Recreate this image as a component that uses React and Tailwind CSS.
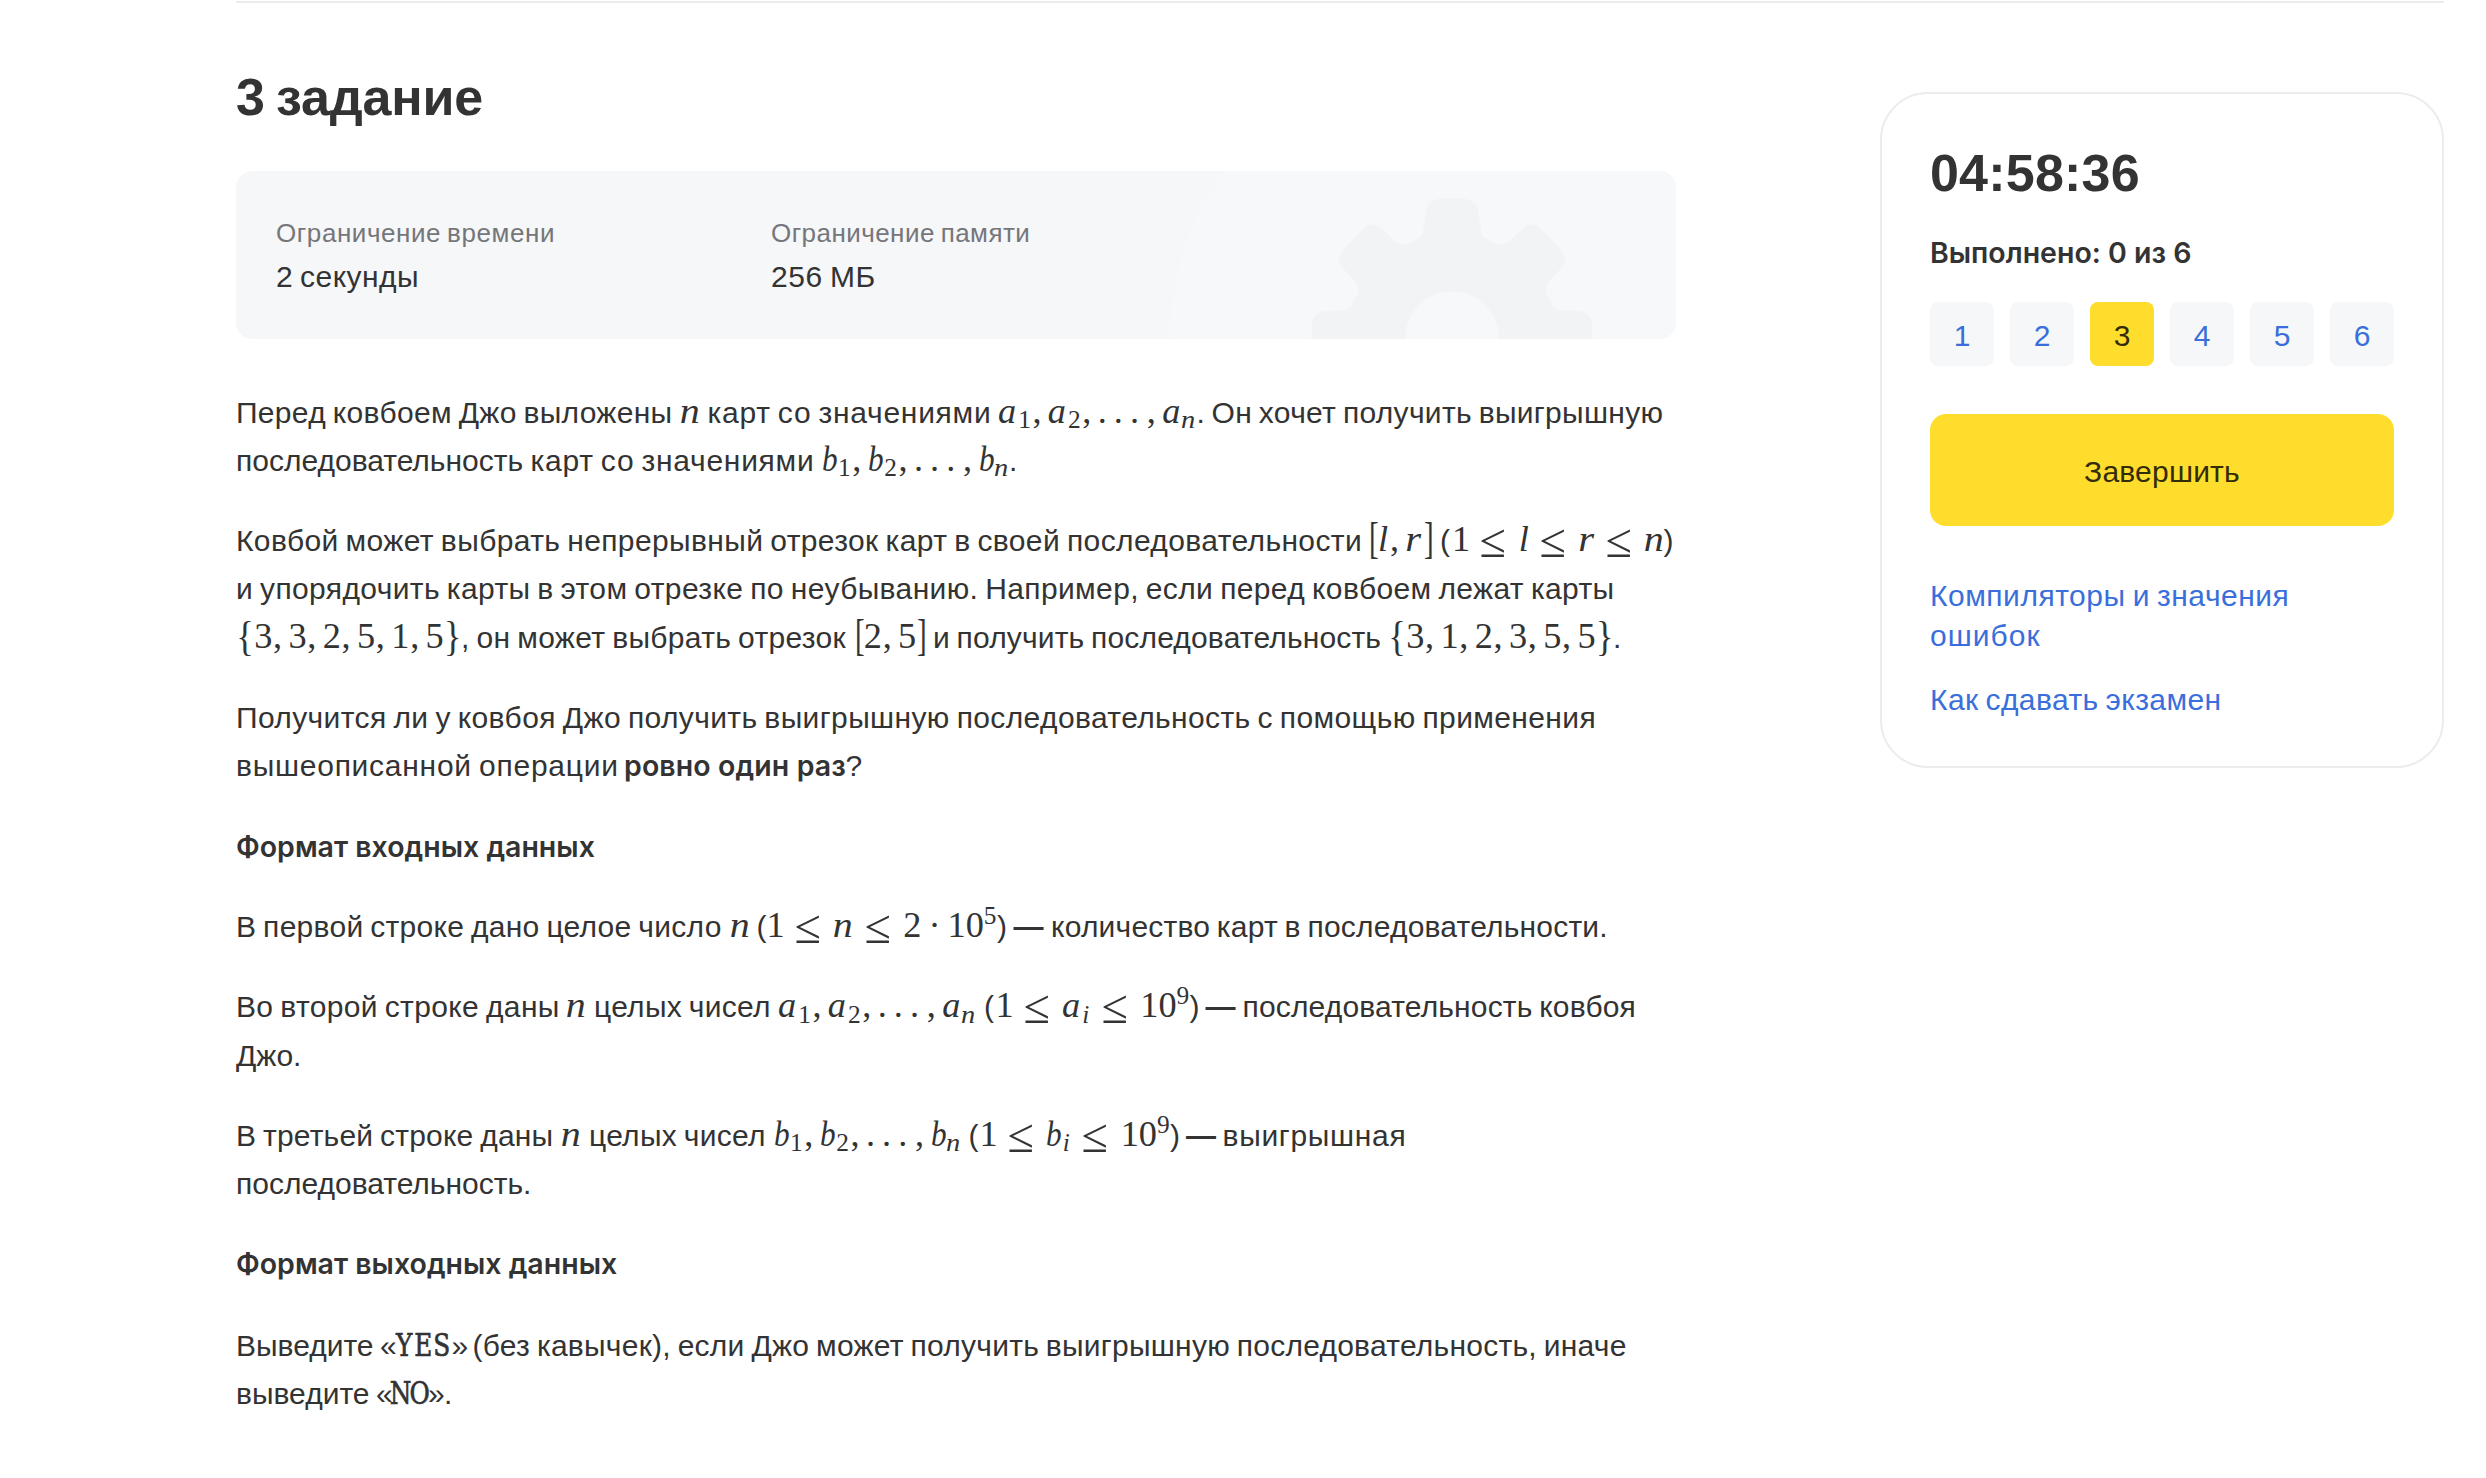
import React from "react";

/* ---------- math atoms ---------- */
const MathBox = ({ w, children }) => (
  <span className={`${w} shrink-0 whitespace-nowrap font-['Liberation_Serif',serif] text-[36.3px] leading-[0]`}>
    {children}
  </span>
);

const LETTERS = {
  n: "w-[0.6em] scale-x-[1.1] pr-[2px]",
  a: "w-[0.5286em] pr-px",
  b: "w-[0.4292em] scale-x-[0.86] origin-left",
  l: "w-[0.3177em] pr-px",
  r: "w-[0.479em] scale-x-[1.12] pr-px",
};
const V = ({ c }) => <i className={`inline-block text-center leading-[0] ${LETTERS[c]}`}>{c}</i>;
const D = ({ c }) => <span className="inline-block w-[0.5em] text-center">{c}</span>;
const Comma = () => <span className="inline-block w-[0.4447em] pl-[0.02em] text-left">,</span>;
const Le = () => (
  <span className="inline-block w-[1.3336em] pr-[3px] text-center">
    <span className="inline-block scale-x-[1.12] scale-y-[1.12] align-[-4px] text-[43px] leading-[0]">≤</span>
  </span>
);
const Dots = () => (
  <>
    <span className="inline-block w-[0.4447em]">.</span>
    <span className="inline-block w-[0.4447em]">.</span>
    <span className="inline-block w-[0.4447em]">.</span>
  </>
);
const Bracket = ({ c }) => (
  <span className="inline-block w-[0.278em] scale-x-[0.8] scale-y-[1.2] text-center leading-[0]">{c}</span>
);
const Brace = ({ c }) => (
  <span className="inline-block w-[0.5em] scale-y-[1.15] text-center leading-[0]">{c}</span>
);
const SubDigit = ({ c }) => (
  <span className="inline-block w-[14.5px] pl-px align-[-5.4px] text-[25.4px] leading-[0]">{c}</span>
);
const SubN = () => (
  <i className="inline-block w-[17px] scale-x-[1.12] pl-px align-[-5.4px] text-[25.4px] leading-[0]">n</i>
);
const SubI = () => (
  <i className="inline-block w-[10.6px] pl-px align-[-5.4px] text-[25.4px] leading-[0]">i</i>
);
const Sup = ({ c }) => (
  <span className="inline-block w-[14.5px] align-[13.2px] text-[25.4px] leading-[0]">{c}</span>
);
const Sequence = ({ v, w }) => (
  <MathBox w={w}>
    <V c={v} /><SubDigit c="1" /><Comma />
    <V c={v} /><SubDigit c="2" /><Comma />
    <Dots /><Comma />
    <V c={v} /><SubN />
  </MathBox>
);
const CardSet = ({ values }) => (
  <MathBox w="w-[225px]">
    <Brace c="{" />
    {values.map((x, i) => (
      <React.Fragment key={i}>
        <D c={x} />
        {i < values.length - 1 && <Comma />}
      </React.Fragment>
    ))}
    <Brace c="}" />
  </MathBox>
);
const Limits = ({ v, w }) => (
  <MathBox w={w}>
    <D c="1" /><Le /><V c={v} /><SubI /><Le /><D c="1" /><D c="0" /><Sup c="9" />
  </MathBox>
);
const Mono = ({ text, w }) => (
  <span className={`${w} flex shrink-0 font-['DejaVu_Serif',serif] text-[31px] [-webkit-text-stroke:0.7px_#333]`}>
    {text.split("").map((c, i) => (
      <span key={i} className="flex w-[19px] justify-center">
        <span className="inline-block scale-x-[0.8]">{c}</span>
      </span>
    ))}
  </span>
);

/* ---------- text layout ---------- */
const Line = ({ children }) => (
  <div className="flex h-[48.3px] items-baseline whitespace-pre leading-[48.3px] [word-spacing:-1.8px]">
    {children}
  </div>
);
const T = ({ c = "", children }) => <span className={`shrink-0 ${c}`}>{children}</span>;
const Dash = ({ w }) => <b className={`shrink-0 ${w}`}>—</b>;
const Strong = ({ c = "", children }) => (
  <b className={`shrink-0 font-['Inter',sans-serif] text-[28.5px] font-semibold [word-spacing:0px] ${c}`}>{children}</b>
);

function LimitsCard() {
  const gear =
    "M1216 27H1222Q1241 27.5 1242.2 41L1245.1 59C1246.5 65 1247 66 1250.1 67.5L1261 73Q1266.5 76 1272 70.7L1288.7 56.3Q1295.7 50 1303.2 56.3Q1315 67 1326 80.7Q1331.5 88 1328 94L1313.5 110Q1308 117 1311 124L1315.6 132.3Q1318 138 1323 138.7L1343 140.2Q1355 141 1356 152L1356.6 168H1216Z";
  return (
    <section className="relative mt-10 h-[168px] overflow-hidden rounded-2xl bg-[#f6f7f9]">
      <svg className="absolute inset-0" width="1440" height="168" viewBox="0 0 1440 168">
        <circle cx="1227" cy="168" r="293" fill="#f7f8fa" />
        <g fill="#f1f3f4">
          <path d={gear} />
          <path d={gear} transform="translate(2432.2 0) scale(-1 1)" />
        </g>
        <circle cx="1216.1" cy="167.5" r="47" fill="#f7f8fa" />
      </svg>
      <dl className="relative flex pl-10 pt-[42px] [word-spacing:-1.8px]">
        <div className="w-[495px]">
          <dt className="text-[26px] leading-[40px] tracking-[0.57px] text-[#75767a]">Ограничение времени</dt>
          <dd className="text-[30px] leading-[48px] tracking-[0.45px]">2 секунды</dd>
        </div>
        <div>
          <dt className="text-[26px] leading-[40px] tracking-[0.45px] text-[#75767a]">Ограничение памяти</dt>
          <dd className="text-[30px] leading-[48px] tracking-[0.6px]">256 МБ</dd>
        </div>
      </dl>
    </section>
  );
}

function Statement() {
  return (
    <article className="mt-[49.6px] flex flex-col gap-8">
      <div>
        <Line>
          <T c="w-[443.5px] tracking-[0.3px]">Перед ковбоем Джо выложены</T>
          <MathBox w="w-[28px]"><V c="n" /></MathBox>
          <T c="w-[290.5px] tracking-[0.72px]">карт со значениями</T>
          <Sequence v="a" w="w-[198.5px]" />
          <T c="w-[15px]">.</T>
          <T c="tracking-[0.3px]">Он хочет получить выигрышную</T>
        </Line>
        <Line>
          <T c="w-[294.5px]">последовательность</T>
          <T c="w-[291px] tracking-[0.72px]">карт со значениями</T>
          <Sequence v="b" w="w-[187.5px]" />
          <T>.</T>
        </Line>
      </div>
      <div>
        <Line>
          <T c="w-[1131.7px] tracking-[0.38px]">
            Ковбой может выбрать непрерывный отрезок карт в своей последовательности
          </T>
          <MathBox w="w-[72.3px]"><Bracket c="[" /><V c="l" /><Comma /><V c="r" /><Bracket c="]" /></MathBox>
          <T c="w-[12px]">(</T>
          <MathBox w="w-[211.5px]"><D c="1" /><Le /><V c="l" /><Le /><V c="r" /><Le /><V c="n" /></MathBox>
          <T>)</T>
        </Line>
        <Line>
          <T c="tracking-[0.37px]">
            и упорядочить карты в этом отрезке по неубыванию. Например, если перед ковбоем лежат карты
          </T>
        </Line>
        <Line>
          <CardSet values={["3", "3", "2", "5", "1", "5"]} />
          <T c="w-[392.7px] tracking-[0.32px]">, он может выбрать отрезок</T>
          <MathBox w="w-[79.3px]"><Bracket c="[" /><D c="2" /><Comma /><D c="5" /><Bracket c="]" /></MathBox>
          <T c="w-[455px] tracking-[0.16px]">и получить последовательность</T>
          <CardSet values={["3", "1", "2", "3", "5", "5"]} />
          <T>.</T>
        </Line>
      </div>
      <div>
        <Line>
          <T c="tracking-[0.38px]">
            Получится ли у ковбоя Джо получить выигрышную последовательность с помощью применения
          </T>
        </Line>
        <Line>
          <T c="w-[388px] tracking-[0.74px]">вышеописанной операции</T>
          <Strong c="w-[221.5px] tracking-[0.1px]">ровно один раз</Strong>
          <T>?</T>
        </Line>
      </div>
      <Line><Strong>Формат входных данных</Strong></Line>
      <Line>
        <T c="w-[494px] tracking-[0.28px]">В первой строке дано целое число</T>
        <MathBox w="w-[26.5px]"><V c="n" /></MathBox>
        <T c="w-[10px]">(</T>
        <MathBox w="w-[230.5px]">
          <D c="1" /><Le /><V c="n" /><Le /><D c="2" />
          <span className="inline-block w-[0.722em] text-center">·</span>
          <D c="1" /><D c="0" /><Sup c="5" />
        </MathBox>
        <T c="w-[16.5px]">)</T>
        <Dash w="w-[37.5px]" />
        <T c="tracking-[0.2px]">количество карт в последовательности.</T>
      </Line>
      <div>
        <Line>
          <T c="w-[330px] tracking-[0.35px]">Во второй строке даны</T>
          <MathBox w="w-[28px]"><V c="n" /></MathBox>
          <T c="w-[184px] tracking-[0.28px]">целых чисел</T>
          <Sequence v="a" w="w-[206px]" />
          <T c="w-[11.5px]">(</T>
          <Limits v="a" w="w-[194px]" />
          <T c="w-[16px]">)</T>
          <Dash w="w-[37px]" />
          <T c="tracking-[0.16px]">последовательность ковбоя</T>
        </Line>
        <Line><T>Джо.</T></Line>
      </div>
      <div>
        <Line>
          <T c="w-[325px] tracking-[0.2px]">В третьей строке даны</T>
          <MathBox w="w-[28px]"><V c="n" /></MathBox>
          <T c="w-[184.5px] tracking-[0.28px]">целых чисел</T>
          <Sequence v="b" w="w-[195px]" />
          <T c="w-[11px]">(</T>
          <Limits v="b" w="w-[190.5px]" />
          <T c="w-[16px]">)</T>
          <Dash w="w-[36.5px]" />
          <T c="tracking-[0.69px]">выигрышная</T>
        </Line>
        <Line><T>последовательность.</T></Line>
      </div>
      <Line><Strong>Формат выходных данных</Strong></Line>
      <div>
        <Line>
          <T c="w-[158.5px]">Выведите «</T>
          <Mono text="YES" w="w-[57px]" />
          <T c="w-[21px]">»</T>
          <T c="tracking-[0.25px]">
            (без кавычек), если Джо может получить выигрышную последовательность, иначе
          </T>
        </Line>
        <Line>
          <T c="w-[155px]">выведите «</T>
          <Mono text="NO" w="w-[37px]" />
          <T c="tracking-[-0.8px]">».</T>
        </Line>
      </div>
    </article>
  );
}

function Sidebar() {
  return (
    <aside className="mt-[89px] h-[676px] w-[564px] rounded-[48px] border-2 border-[#ececee] px-12 pt-[47px]">
      <div className="text-[52px] font-bold leading-[64px] tracking-[0.2px]">04:58:36</div>
      <div className="mt-7 font-['Inter',sans-serif] text-[28.5px] font-semibold leading-[40px]">
        Выполнено: 0 из 6
      </div>
      <nav className="mt-[29px] flex gap-4">
        {["1", "2", "3", "4", "5", "6"].map((n) => (
          <a
            key={n}
            className={`flex size-16 items-center justify-center rounded-lg pt-1 text-[30px] leading-none ${
              n === "3" ? "bg-[#ffdd2d] text-[#332c09]" : "bg-[#f6f7f9] text-[#3a6fdb]"
            }`}
          >
            {n}
          </a>
        ))}
      </nav>
      <button className="mt-12 flex h-28 w-full items-center justify-center rounded-2xl bg-[#ffdd2d] pt-1 text-[30px] leading-[40px] tracking-[0.2px] text-[#332c09]">
        Завершить
      </button>
      <div className="mt-[50px] flex flex-col gap-6 text-[30px] leading-[40px] text-[#3a6fdb] [word-spacing:-1.8px]">
        <a className="tracking-[0.52px]">
          Компиляторы и значения<br /><span className="tracking-[1px]">ошибок</span>
        </a>
        <a className="tracking-[0.42px]">Как сдавать экзамен</a>
      </div>
    </aside>
  );
}

export default function App() {
  return (
    <div className="h-[1478px] overflow-hidden bg-white pl-[236px] pr-[42px] pt-px font-['Liberation_Sans',sans-serif] text-[30px] text-[#333333]">
      <div className="h-0.5 bg-[#ececec]" />
      <div className="flex items-start justify-between">
        <main className="w-[1440px]">
          <h1 className="mt-[60px] text-[52px] font-bold leading-[68px] tracking-[-0.2px] [word-spacing:-3px]">3 задание</h1>
          <LimitsCard />
          <Statement />
        </main>
        <Sidebar />
      </div>
    </div>
  );
}
